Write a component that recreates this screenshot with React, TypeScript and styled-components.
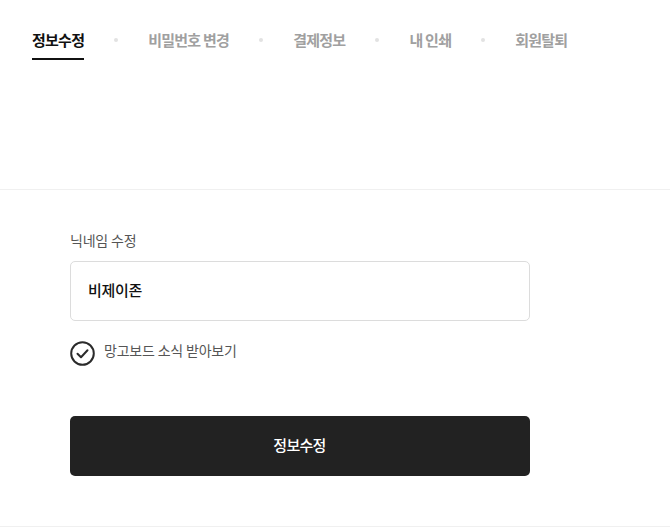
import React, { FC } from 'react';
import styled, { createGlobalStyle } from 'styled-components';

const GlobalStyle = createGlobalStyle`
  html, body {
    margin: 0;
    padding: 0;
    background: #fff;
  }
  body {
    font-family: "Noto Sans CJK KR", "Noto Sans", sans-serif;
  }
`;

const Page = styled.div`
  width: 670px;
  height: 528px;
  overflow: hidden;
`;

const TabSection = styled.nav`
  height: 190px;
  box-sizing: border-box;
  padding: 27px 32px 0;
  border-bottom: 1px solid #f0f0f0;
`;

const TabList = styled.ul`
  display: flex;
  align-items: flex-start;
  margin: 0;
  padding: 0;
  list-style: none;
`;

const Tab = styled.li<{ $active?: boolean }>`
  height: 31px;
  line-height: 26px;
  font-size: 15px;
  font-weight: 700;
  letter-spacing: -0.75px;
  white-space: nowrap;
  color: ${({ $active }) => ($active ? '#111' : '#a0a0a0')};
  border-bottom: 2px solid ${({ $active }) => ($active ? '#111' : 'transparent')};
`;

const Dot = styled.li`
  width: 4px;
  height: 4px;
  margin: 11px 30px 0 30px;
  border-radius: 50%;
  background: #e2e2e2;
`;

const Form = styled.form`
  width: 460px;
  margin-left: 70px;
  padding-top: 40px;
`;

const Label = styled.label`
  display: block;
  height: 20px;
  line-height: 20px;
  font-size: 14px;
  letter-spacing: -0.2px;
  color: #555;
`;

const Input = styled.input`
  display: block;
  width: 100%;
  height: 60px;
  margin-top: 11px;
  padding: 0 18px 4px 17px;
  box-sizing: border-box;
  border: 1px solid #dcdcdc;
  border-radius: 5px;
  outline: none;
  background: #fff;
  font-family: inherit;
  font-size: 15px;
  font-weight: 500;
  letter-spacing: -0.3px;
  color: #111;
`;

const CheckRow = styled.div`
  display: flex;
  align-items: flex-start;
  gap: 9px;
  margin-top: 20px;
  height: 25px;
`;

const CheckLabel = styled.span`
  font-size: 14px;
  letter-spacing: -0.2px;
  line-height: 18px;
  color: #555;
`;

const Submit = styled.button`
  display: block;
  width: 100%;
  height: 60px;
  margin-top: 50px;
  padding: 0 1px 4px 0;
  border: 0;
  border-radius: 5px;
  background: #222;
  color: #fff;
  font-family: inherit;
  font-size: 15px;
  font-weight: 500;
  letter-spacing: -0.7px;
`;

const BottomLine = styled.div`
  margin-top: 50px;
  border-top: 1px solid #f0f0f0;
`;

const tabs = ['정보수정', '비밀번호 변경', '결제정보', '내 인쇄', '회원탈퇴'];

const CheckIcon: FC = () => (
  <svg width="25" height="25" viewBox="0 0 25 25" fill="none">
    <circle cx="12.5" cy="12.5" r="11.3" stroke="#2b2b2b" strokeWidth="2" />
    <path d="M7.5 12.8l3.5 3.5 6.5-7" stroke="#2b2b2b" strokeWidth="2" strokeLinecap="round" strokeLinejoin="round" />
  </svg>
);

const App: FC = () => (
  <Page>
    <GlobalStyle />
    <TabSection>
      <TabList>
        {tabs.map((tab, index) => (
          <React.Fragment key={tab}>
            {index > 0 && <Dot />}
            <Tab $active={index === 0}>{tab}</Tab>
          </React.Fragment>
        ))}
      </TabList>
    </TabSection>
    <Form onSubmit={(e) => e.preventDefault()}>
      <Label htmlFor="nickname">닉네임 수정</Label>
      <Input id="nickname" defaultValue="비제이존" />
      <CheckRow>
        <CheckIcon />
        <CheckLabel>망고보드 소식 받아보기</CheckLabel>
      </CheckRow>
      <Submit type="submit">정보수정</Submit>
    </Form>
    <BottomLine />
  </Page>
);

export default App;
